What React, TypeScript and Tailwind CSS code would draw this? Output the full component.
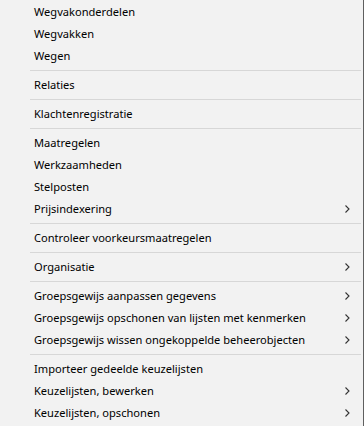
import React from 'react';

type Entry = { label: string; sub?: boolean } | 'sep';

const entries: Entry[] = [
  { label: 'Wegvakonderdelen' },
  { label: 'Wegvakken' },
  { label: 'Wegen' },
  'sep',
  { label: 'Relaties' },
  'sep',
  { label: 'Klachtenregistratie' },
  'sep',
  { label: 'Maatregelen' },
  { label: 'Werkzaamheden' },
  { label: 'Stelposten' },
  { label: 'Prijsindexering', sub: true },
  'sep',
  { label: 'Controleer voorkeursmaatregelen' },
  'sep',
  { label: 'Organisatie', sub: true },
  'sep',
  { label: 'Groepsgewijs aanpassen gegevens', sub: true },
  { label: 'Groepsgewijs opschonen van lijsten met kenmerken', sub: true },
  { label: 'Groepsgewijs wissen ongekoppelde beheerobjecten', sub: true },
  'sep',
  { label: 'Importeer gedeelde keuzelijsten' },
  { label: 'Keuzelijsten, bewerken', sub: true },
  { label: 'Keuzelijsten, opschonen', sub: true },
];

const Chevron = () => (
  <svg width="5" height="8" viewBox="0 0 5 8" className="shrink-0">
    <polyline points="0.5,0.5 4,4 0.5,7.5" fill="none" stroke="#333" strokeWidth="1.1" />
  </svg>
);

export default function App() {
  return (
    <div className="w-[364px] h-[426px] flex bg-[#f2f2f2] overflow-hidden">
      <div
        className="flex-1 pt-px text-[11.1px] text-black"
        style={{ fontFamily: '"Noto Sans", "Open Sans", sans-serif' }}
      >
        {entries.map((e, i) =>
          e === 'sep' ? (
            <div key={i} className="h-[7px] pl-[30px] pr-[2px] flex items-center">
              <div className="h-px w-full bg-[#d7d7d7]" />
            </div>
          ) : (
            <div key={i} className="h-[22px] pl-[34px] pr-[13px] flex items-center justify-between">
              <span className="leading-none">{e.label}</span>
              {e.sub && <Chevron />}
            </div>
          )
        )}
      </div>
      <div className="w-px bg-[#5f5f5f]" />
    </div>
  );
}
